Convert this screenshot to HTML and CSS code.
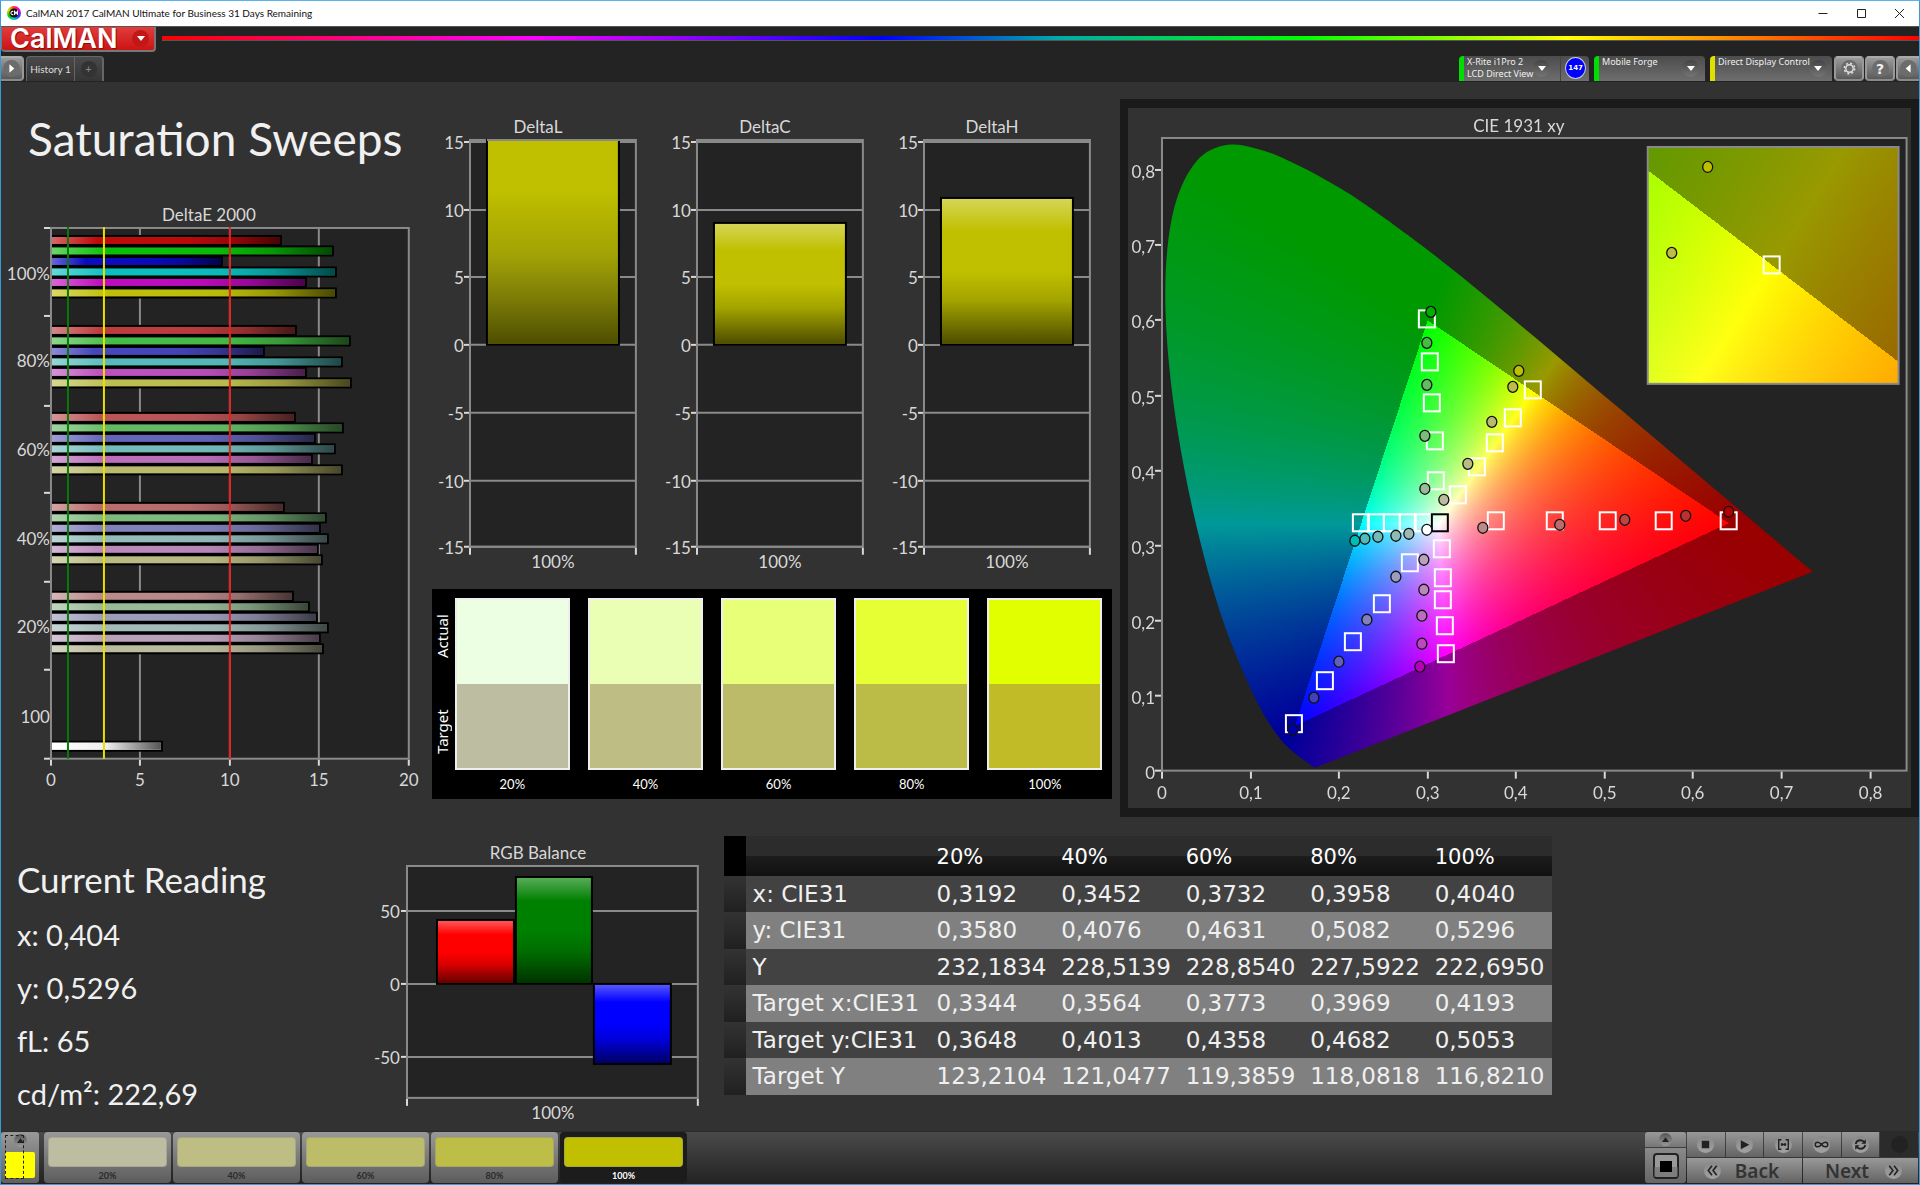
FILE: index.html
```html
<!DOCTYPE html>
<html lang="en">
<head>
<meta charset="utf-8">
<title>CalMAN 2017 CalMAN Ultimate for Business 31 Days Remaining</title>
<link rel="stylesheet" href="styles.css">
</head>
<body>
<div class="window">
  <div class="titlebar">
    <span class="app-icon"><svg viewBox="0 0 14 14" width="14" height="14"><circle cx="7" cy="7" r="4.600" fill="#111"/><path d="M6.300 5.600A1.600 1.600 0 1 0 6.300 8.400M7.600 9V5.400L9 7.400l1.400-2V9" fill="none" stroke="#fff" stroke-width="1.100"/></svg></span>
    <span class="caption">CalMAN 2017 CalMAN Ultimate for Business 31 Days Remaining</span>
    <span class="window-buttons">
      <button class="winbtn" aria-label="Minimize"><svg viewBox="0 0 12 12"><path d="M1.500 6.500h9" stroke="#222" fill="none"/></svg></button>
      <button class="winbtn" aria-label="Maximize"><svg viewBox="0 0 12 12"><path d="M2.500 2.500h8v8h-8z" stroke="#222" fill="none"/></svg></button>
      <button class="winbtn" aria-label="Close"><svg viewBox="0 0 12 12"><path d="M2 2l9 9M11 2l-9 9" stroke="#222" fill="none"/></svg></button>
    </span>
  </div>

  <header class="header">
    <div class="brand-row">
      <button class="brand"><span class="brand-name">CalMAN</span><span class="brand-drop"><svg viewBox="0 0 10 6" width="8" height="5"><path d="M0 0h10L5 6z" fill="#fff"/></svg></span></button>
      <div class="rainbow"></div>
    </div>
    <div class="tab-row">
      <button class="keybtn play" aria-label="Expand"><span class="knob"><svg viewBox="0 0 10 12" width="7" height="9"><path d="M2 0v12l7-6z" fill="#fff"/></svg></span></button>
      <div class="tabs"><button class="tab">History 1</button><button class="tab add" aria-label="Add"><span class="add-knob">+</span></button></div>
      <div class="devices">
        <div class="device meter">
          <button class="device-main"><span class="device-text">X-Rite i1Pro 2<br>LCD Direct View</span><span class="drop"><svg viewBox="0 0 10 6" width="8" height="5"><path d="M0 0h10L5 6z" fill="#fff"/></svg></span></button>
          <span class="count">147</span>
        </div>
        <div class="device source">
          <button class="device-main"><span class="device-text">Mobile Forge</span><span class="drop"><svg viewBox="0 0 10 6" width="8" height="5"><path d="M0 0h10L5 6z" fill="#fff"/></svg></span></button>
        </div>
        <div class="device display">
          <button class="device-main"><span class="device-text">Direct Display Control</span><span class="drop"><svg viewBox="0 0 10 6" width="8" height="5"><path d="M0 0h10L5 6z" fill="#fff"/></svg></span></button>
        </div>
        <div class="keys">
          <button class="keybtn" aria-label="Settings"><span class="knob"><svg viewBox="0 0 14 14" width="13" height="13"><circle cx="7" cy="7" r="4" fill="none" stroke="#ddd" stroke-width="1.600"/><circle cx="7" cy="7" r="5.600" fill="none" stroke="#ddd" stroke-width="1.600" stroke-dasharray="2.200 2.200"/></svg></span></button>
          <button class="keybtn help" aria-label="Help"><span class="knob">?</span></button>
          <button class="keybtn collapse" aria-label="Collapse"><span class="knob"><svg viewBox="0 0 10 12" width="7" height="9"><path d="M8 0v12L1 6z" fill="#fff"/></svg></span></button>
        </div>
      </div>
    </div>
  </header>

  <main class="main">
    <svg class="defs" width="0" height="0" aria-hidden="true">
      <defs>
        <linearGradient id="shade-x"><stop offset="0" stop-color="#fff" stop-opacity=".38"/><stop offset=".2" stop-color="#fff" stop-opacity="0"/><stop offset=".6" stop-color="#000" stop-opacity=".03"/><stop offset=".78" stop-color="#000" stop-opacity=".2"/><stop offset="1" stop-color="#000" stop-opacity=".62"/></linearGradient>
        <linearGradient id="shade-y" x2="0" y2="1"><stop offset="0" stop-color="#fff" stop-opacity=".34"/><stop offset=".22" stop-color="#fff" stop-opacity="0"/><stop offset=".5" stop-color="#000" stop-opacity="0"/><stop offset=".7" stop-color="#000" stop-opacity=".15"/><stop offset="1" stop-color="#000" stop-opacity=".6"/></linearGradient>
        <linearGradient id="shade-y-cut" x2="0" y2="1"><stop offset="0" stop-color="#000" stop-opacity="0"/><stop offset=".25" stop-color="#000" stop-opacity="0"/><stop offset=".55" stop-color="#222" stop-opacity=".18"/><stop offset="1" stop-color="#000" stop-opacity=".6"/></linearGradient>
        <linearGradient id="shade-gray"><stop offset="0" stop-color="#fff"/><stop offset=".5" stop-color="#eee"/><stop offset="1" stop-color="#555"/></linearGradient>
      </defs>
    </svg>
    <section class="upper">
      <div class="sweeps">
        <h1 class="page-title">Saturation Sweeps</h1>
        <svg class="chart" id="delta-e" viewBox="0 0 430 600" role="img" aria-label="DeltaE 2000"></svg>
      </div>
      <div class="deltas">
        <div class="delta-row">
          <svg class="chart delta" viewBox="0 0 227 465" data-title="DeltaL" data-top="30" data-cut="1"></svg>
          <svg class="chart delta" viewBox="0 0 227 465" data-title="DeltaC" data-top="113"></svg>
          <svg class="chart delta" viewBox="0 0 227 465" data-title="DeltaH" data-top="88"></svg>
        </div>
        <div class="swatches">
          <div class="swatch-side"><span>Actual</span><span>Target</span></div>
          <div class="swatch"><div class="pair s20"></div>20%</div>
          <div class="swatch"><div class="pair s40"></div>40%</div>
          <div class="swatch"><div class="pair s60"></div>60%</div>
          <div class="swatch"><div class="pair s80"></div>80%</div>
          <div class="swatch"><div class="pair s100"></div>100%</div>
        </div>
      </div>
      <div class="cie">
        <canvas class="cie-layer" id="cie-fill" width="783" height="700"></canvas>
        <svg class="cie-layer" id="cie" viewBox="0 0 783 700" role="img" aria-label="CIE 1931 xy"></svg>
      </div>
    </section>

    <section class="lower">
      <div class="reading">
        <h2>Current Reading</h2>
        <p>x: 0,404</p>
        <p>y: 0,5296</p>
        <p>fL: 65</p>
        <p>cd/m²: 222,69</p>
      </div>
      <svg class="chart rgb" id="rgb" viewBox="0 0 350 290" role="img" aria-label="RGB Balance"></svg>
      <table class="data">
        <thead><tr><th class="grip"></th><th class="name"></th><th>20%</th><th>40%</th><th>60%</th><th>80%</th><th>100%</th></tr></thead>
        <tbody>
          <tr><td class="grip"></td><td>x: CIE31</td><td>0,3192</td><td>0,3452</td><td>0,3732</td><td>0,3958</td><td>0,4040</td></tr>
          <tr><td class="grip"></td><td>y: CIE31</td><td>0,3580</td><td>0,4076</td><td>0,4631</td><td>0,5082</td><td>0,5296</td></tr>
          <tr><td class="grip"></td><td>Y</td><td>232,1834</td><td>228,5139</td><td>228,8540</td><td>227,5922</td><td>222,6950</td></tr>
          <tr><td class="grip"></td><td>Target x:CIE31</td><td>0,3344</td><td>0,3564</td><td>0,3773</td><td>0,3969</td><td>0,4193</td></tr>
          <tr><td class="grip"></td><td>Target y:CIE31</td><td>0,3648</td><td>0,4013</td><td>0,4358</td><td>0,4682</td><td>0,5053</td></tr>
          <tr><td class="grip"></td><td>Target Y</td><td>123,2104</td><td>121,0477</td><td>119,3859</td><td>118,0818</td><td>116,8210</td></tr>
        </tbody>
      </table>
    </section>
  </main>

  <footer class="toolbar">
    <button class="current" aria-label="Current colour"><span class="mini"><svg viewBox="0 0 10 8" width="7" height="6"><path d="M5 0l5 7H0z" fill="#222"/></svg></span><span class="chip"></span></button>
    <button class="level"><span class="c20"></span>20%</button>
    <button class="level"><span class="c40"></span>40%</button>
    <button class="level"><span class="c60"></span>60%</button>
    <button class="level"><span class="c80"></span>80%</button>
    <button class="level selected"><span class="c100"></span>100%</button>
    <div class="transport">
      <div class="stopper">
        <button class="up" aria-label="More"><span class="mini"><svg viewBox="0 0 10 8" width="7" height="6"><path d="M5 0l5 7H0z" fill="#222"/></svg></span></button>
        <button class="bigstop" aria-label="Pattern"><svg viewBox="0 0 26 26" width="26" height="26"><rect x="1" y="1" width="24" height="24" rx="3" fill="#999" stroke="#222" stroke-width="2"/><path d="M1 14h24v10H1z" fill="#6a6a6a" opacity=".6"/><rect x="7" y="8" width="12" height="11" fill="#000"/></svg></button>
      </div>
      <div class="controls">
        <button aria-label="Stop"><span class="dot"><svg viewBox="0 0 16 16"><path d="M4.500 4.500h7v7h-7z" fill="#222"/></svg></span></button>
        <button aria-label="Play"><span class="dot"><svg viewBox="0 0 16 16"><path d="M4.500 4l8 4.300-8 4.200z" fill="#222"/></svg></span></button>
        <button aria-label="Range"><span class="dot"><svg viewBox="0 0 16 16"><path d="M6 3.500H3.500v9H6M10 3.500h2.500v9H10M5.500 8h5M6.500 6.500v3M9.500 6.500v3" stroke="#222" stroke-width="1.300" fill="none"/></svg></span></button>
        <button aria-label="Loop"><span class="dot"><svg viewBox="0 0 16 16"><path d="M8 8C6.500 6 5.300 5.800 4.300 5.800a2.200 2.200 0 0 0 0 4.400C5.300 10.200 6.500 10 8 8s2.700-2.200 3.700-2.200a2.200 2.200 0 0 1 0 4.400C10.700 10.200 9.500 10 8 8z" stroke="#222" stroke-width="1.400" fill="none"/></svg></span></button>
        <button aria-label="Refresh"><span class="dot"><svg viewBox="0 0 16 16"><path d="M3.500 7.500C4 5 6 4 8 4c1.400 0 2.400.5 3.200 1.300M12.500 8.500C12 11 10 12 8 12c-1.400 0-2.400-.5-3.200-1.300" stroke="#222" stroke-width="1.700" fill="none"/><path d="M13 3v4.200H8.800zM3 13V8.800h4.200z" fill="#222"/></svg></span></button>
        <button class="off" aria-label="Unavailable" disabled><span class="dot"></span></button>
        <button class="nav back"><span class="dot"><svg viewBox="0 0 16 16"><path d="M7.500 3.500L4 8l3.500 4.500M12 3.500L8.500 8l3.500 4.500" stroke="#222" stroke-width="1.500" fill="none"/></svg></span>Back</button>
        <button class="nav next">Next<span class="dot"><svg viewBox="0 0 16 16"><path d="M4 3.500L7.500 8 4 12.500M8.500 3.500L12 8l-3.500 4.500" stroke="#222" stroke-width="1.500" fill="none"/></svg></span></button>
      </div>
    </div>
  </footer>
</div>
<script src="charts.js"></script>
</body>
</html>
```
FILE: styles.css
```css
* { box-sizing: border-box; }
body { margin: 0; background: #323232; font-family: Lato, "Open Sans", sans-serif; color: #f0f0f0; }
button { font: inherit; color: inherit; border: 0; margin: 0; padding: 0; background: none; display: flex; align-items: center; justify-content: center; }
svg { display: block; }
.window { min-height: 100vh; display: flex; flex-direction: column; border: 1px solid #3a9ad9; border-top-color: #5ab4f0; }

.titlebar { height: 25px; background: #fff; display: flex; align-items: center; padding: 0 14px 2px 6px; color: #111; }
.app-icon { width: 14px; height: 14px; border-radius: 50%; background: conic-gradient(#f33, #e0e, #33f, #0cc, #0c0, #dd0, #f33); }
.caption { font-size: 10px; margin-left: 5px; }
.window-buttons { margin-left: auto; display: flex; gap: 26px; }
.winbtn { width: 12px; height: 12px; }
.winbtn svg { width: 12px; height: 12px; }

.header { height: 56px; background: #232323; }
.brand-row { height: 30px; display: flex; align-items: flex-start; gap: 6px; border-top: 1px solid #555; }
.brand { width: 155px; height: 25px; background: linear-gradient(#e23c3c, #cc1414); border: 1px solid #777; border-width: 0 2px 2px 1px; border-radius: 0 0 4px 4px; justify-content: space-between; padding: 0 5px 0 8px; }
.brand-name { font: 600 27px/24px Inter, sans-serif; color: #fff; text-shadow: 1px 1px 1px #7a1010; }
.brand-drop { width: 17px; height: 17px; border-radius: 50%; background: #c01818; display: flex; align-items: center; justify-content: center; }
.rainbow { flex: 1; height: 5px; margin-top: 9px; border-bottom: 1px solid #555; background: linear-gradient(90deg, #f00, #f0f 21%, #00f 41%, #0aa 51%, #0f0 65%, #ff0 80%, #f00); }
.tab-row { height: 25px; display: flex; }
.keybtn { width: 30px; height: 25px; border: 2px solid #999; border-color: #aaa #999 #8a8a8a; border-radius: 4px; background: linear-gradient(#9a9a9a, #5a5a5a); }
.knob { width: 17px; height: 17px; border-radius: 50%; background: #6c6c6c; display: flex; align-items: center; justify-content: center; }
.play { width: 23px; border-left: 0; border-radius: 0 4px 4px 0; }
.tabs { margin-left: 2px; height: 25px; display: flex; border: 1px solid #666; border-width: 1px 2px 0 1px; border-radius: 4px 4px 0 0; background: linear-gradient(#4a4a4a, #353535); color: #ddd; font-size: 10px; }
.tab { width: 48px; border-right: 1px solid #666; }
.tab.add { width: 27px; border: 0; color: #888; }
.add-knob { width: 16px; height: 16px; border-radius: 50%; background: #333; line-height: 15px; font-size: 11px; }
.devices { margin-left: auto; display: flex; gap: 5px; }
.device { display: flex; background: linear-gradient(#4c4c4c, #6e6e6e); border-left: 5px solid #0d0; border-radius: 4px 4px 0 0; height: 25px; }
.device-main { flex: 1; align-items: flex-start; justify-content: space-between; padding-left: 3px; text-align: left; }
.device-text { font: 9px/12px "Noto Sans", sans-serif; white-space: nowrap; }
.drop { width: 17px; height: 17px; margin-top: 4px; border-radius: 50%; background: linear-gradient(#444, #757575); display: flex; align-items: center; justify-content: center; }
.meter { width: 130px; }
.meter .device-main { padding-right: 10px; border-right: 1px solid #444; }
.source { width: 111px; padding-right: 6px; }
.display { width: 122px; padding-right: 6px; border-left-color: #e0e000; margin-right: -3px; }
.count { width: 22px; height: 22px; margin: 1px 3px 0 4px; border-radius: 50%; background: #00f; border: 1px solid #ccd; font: 700 7px/20px "DejaVu Sans", sans-serif; text-align: center; color: #fff; }
.keys { display: flex; gap: 1px; }
.help { font: 700 14px/16px "DejaVu Sans", sans-serif; }
.collapse { width: 23px; border-right: 0; border-radius: 4px 0 0 4px; }

.main { flex: 1; background: #323232; }
.defs { position: absolute; }
.upper { display: grid; grid-template-columns: 430fr 690fr 799fr; align-items: start; }
.page-title { margin: 0; padding: 25px 0 0 27px; height: 118px; font-size: 46px; line-height: 64px; font-weight: 400; white-space: nowrap; }
.chart { width: 100%; height: auto; }
.deltas { padding-top: 28px; }
.delta-row { display: grid; grid-template-columns: repeat(3, 227fr) 9fr; }
.swatches { margin: 14px 8px 0 1px; height: 210px; background: #000; display: grid; grid-template-columns: 5px repeat(5, 1fr); column-gap: 18px; padding: 9px 10px 0 0; }
.swatch { text-align: center; font-size: 13px; line-height: 28px; color: #fff; }
.pair { height: 172px; border: 2px solid #eee; }
.swatch-side { width: 20px; display: grid; grid-template-rows: 86px 86px; font: 15px/20px "Noto Sans", sans-serif; color: #fff; }
.swatch-side span { writing-mode: vertical-rl; transform: rotate(180deg); text-align: center; padding-top: 10px; }
.swatch-side span:last-child { padding: 0 0 10px; }
.s20 { background: linear-gradient(#ecffe2 50%, #bdbda2 50%); }
.s40 { background: linear-gradient(#ebffb4 50%, #bdbd84 50%); }
.s60 { background: linear-gradient(#e8ff78 50%, #bbbb69 50%); }
.s80 { background: linear-gradient(#e6ff34 50%, #bbbb48 50%); }
.s100 { background: linear-gradient(#e2ff00 50%, #c0bb26 50%); }
.cie { margin-top: 17px; border: 9px solid #1a1a1a; border-width: 9px 8px; display: grid; background: #323232; }
.cie-layer { grid-area: 1 / 1; width: 100%; height: auto; }

.lower { display: grid; grid-template-columns: 369fr 350fr 4fr 829fr 367fr; align-items: start; padding-top: 19px; }
.rgb { margin-top: 2px; }
.reading { padding: 16px 0 0 16px; font-size: 29px; }
.reading h2 { margin: 0 0 2px; font-size: 35px; line-height: 54px; font-weight: 400; }
.reading p { margin: 0; line-height: 52px; padding-top: 1px; }
.data { grid-column: 4; width: 100%; height: 259px; border-collapse: collapse; table-layout: fixed; font: 23px/24px "DejaVu Sans", sans-serif; }
.data th, .data td { padding: 0 0 0 7px; text-align: left; font-weight: 400; white-space: nowrap; }
.data th { height: 40px; color: #fff; font-size: 21px; padding-top: 2px; }
.data .grip { width: 22px; background: linear-gradient(#333, #202020); padding: 0; }
.data thead .grip { background: #000; }
.data .name { width: 184px; }
.data thead tr { background: linear-gradient(#2c2c2c 50%, #1c1c1c 51%, #111); }
.data tbody tr { background: #424242; }
.data tbody tr:nth-child(even) { background: #808080; }

.toolbar { height: 53px; display: flex; background: linear-gradient(#4a4a4a, #222); border-top: 1px solid #2a2a2a; padding: 0 1px 1px 0; gap: 2px; }
.current { position: relative; width: 38px; margin-right: 3px; flex-direction: column; justify-content: space-between; padding: 2px 4px 5px; background: linear-gradient(#999, #606060); border-radius: 3px; }
.current::after { content: ""; position: absolute; left: 4px; top: 3px; bottom: 4px; width: 17px; border: 1px dashed #222; }
.mini { width: 13px; height: 13px; border-radius: 50%; background: linear-gradient(#555, #999); display: flex; align-items: center; justify-content: center; }
.chip { width: 30px; height: 26px; background: #ff0; border-radius: 2px; }
.level { width: 127px; flex-direction: column; justify-content: flex-start; padding-top: 5px; border-radius: 4px; background: linear-gradient(#999, #5c5c5c); color: #2a2a2a; font-size: 9px; font-weight: 700; line-height: 15px; }
.level span { width: 119px; height: 31px; margin-bottom: 1px; border-radius: 4px; border: 1px solid #8886; }
.level.selected { background: #1c1c1c; color: #fff; }
.c20 { background: #bdbda2; }
.c40 { background: #bdbd84; }
.c60 { background: #bdbd69; }
.c80 { background: #bdbd48; }
.c100 { background: #c0c000; }
.transport { margin-left: auto; display: flex; gap: 1px; }
.stopper { width: 41px; display: flex; flex-direction: column; gap: 1px; }
.up { height: 15px; background: linear-gradient(#999, #777); border-radius: 3px 3px 0 0; }
.bigstop { flex: 1; background: linear-gradient(#8a8a8a, #666); border-radius: 0 0 3px 3px; }
.controls { width: 231px; display: grid; grid-template-columns: repeat(6, 1fr); grid-template-rows: 25px 25px; gap: 1px; color: #333; }
.controls button { background: linear-gradient(#999, #636363); }
.controls .off { background: #2b2b2b; }
.controls .off .dot { background: #222; }
.controls .nav { grid-column: span 3; gap: 14px; font: 600 19px/24px "Noto Sans", sans-serif; }
.controls .back { padding-right: 6px; }
.controls .next { gap: 16px; padding-left: 6px; }
.dot { width: 17px; height: 17px; border-radius: 50%; background: linear-gradient(#888, #a2a2a2); display: block; }
.dot svg { width: 17px; height: 17px; }

.title { font-size: 17px; fill: #d8d8d8; text-anchor: middle; }
.label { font-size: 17px; fill: #d8d8d8; }
.end { text-anchor: end; }
.mid { text-anchor: middle; }
.plot { fill: #232323; }
.line { stroke: #8a8a8a; stroke-width: 2; fill: none; }
.tick { stroke: #d8d8d8; stroke-width: 2; }
```
FILE: charts.js
```js
const NS = 'http://www.w3.org/2000/svg';
function add(parent, tag, attrs, text) {
  const el = document.createElementNS(NS, tag);
  for (const k in attrs) el.setAttribute(k, attrs[k]);
  if (text !== undefined) el.textContent = text;
  parent.appendChild(el);
  return el;
}
const line = (p, cls, x1, y1, x2, y2) => add(p, 'line', { class: cls, x1, y1, x2, y2 });
const text = (p, cls, x, y, t) => add(p, 'text', { class: cls, x, y }, t);
function bar(p, x, y, width, height, fill, shade) {
  add(p, 'rect', { x, y, width, height, fill, stroke: '#000', 'stroke-width': 2 });
  add(p, 'rect', { x: x + 1, y: y + 1, width: width - 2, height: height - 2, fill: `url(#${shade})` });
}

/* DeltaE 2000: one group of six hues per saturation level */
(function () {
  const s = document.getElementById('delta-e');
  text(s, 'title', 208, 21, 'DeltaE 2000');
  add(s, 'rect', { class: 'plot', x: 50, y: 28, width: 358, height: 531 });
  [139, 229, 318].forEach(x => line(s, 'line', x, 28, x, 559));
  const groups = [
    [40, [280, 332, 221, 335, 305, 335], ['#bf0a0a', '#0abf0a', '#0a0abf', '#0abfbf', '#bf0abf', '#bfbf0a']],
    [130, [295, 349, 263, 341, 305, 350], ['#bd3c3c', '#45bd45', '#4545bd', '#56bbbb', '#bd50bd', '#bdbd50']],
    [217, [294, 342, 314, 334, 311, 341], ['#bb5555', '#64bb64', '#6464bb', '#74bbbb', '#bb6ebb', '#bbbb6e']],
    [307, [283, 325, 319, 327, 317, 321], ['#bb6c6c', '#7dbb7d', '#8080bb', '#92bbbb', '#bb88bb', '#bbbb84']],
    [396, [292, 308, 316, 327, 319, 322], ['#bb8a8a', '#98bb98', '#9c9cbb', '#a5bbbb', '#bba2bb', '#bbbb9e']]
  ];
  groups.forEach(([y, ends, fills]) => ends.forEach((e, i) =>
    bar(s, 50, y - 4 + i * 10.5, e - 50, 9, fills[i], 'shade-x')));
  bar(s, 50, 542, 111, 9, '#fff', 'shade-gray');
  add(s, 'rect', { class: 'line', x: 50, y: 28, width: 358, height: 531 });
  [28, 116, 206, 293, 382, 470, 559].forEach(y => line(s, 'tick', 43, y, 49, y));
  [50, 139, 229, 318, 408].forEach((x, i) => {
    line(s, 'tick', x, 560, x, 566);
    text(s, 'label mid', x, 586, i * 5);
  });
  [['100%', 80], ['80%', 167], ['60%', 256], ['40%', 345], ['20%', 433], ['100', 523]].forEach(([t, y]) => text(s, 'label end', 49, y, t));
  [[67, '#0a780a'], [103, '#e8e000'], [229, '#e02222']].forEach(([x, c]) =>
    add(s, 'line', { x1: x, x2: x, y1: 27, y2: 559, stroke: c, 'stroke-width': 2 }));
})();

/* DeltaL, DeltaC and DeltaH share one frame */
document.querySelectorAll('.delta').forEach(s => {
  text(s, 'title', 107, 23, s.dataset.title);
  add(s, 'rect', { class: 'plot', x: 39, y: 30, width: 166, height: 407 });
  const rows = [[15, 32], [10, 100], [5, 167], [0, 235], [-5, 303], [-10, 371], [-15, 437]];
  rows.forEach(([v, y]) => {
    line(s, 'line', 39, y, 205, y);
    line(s, 'tick', 33, y, 38, y);
    text(s, 'label end', 33, y + 7, v);
  });
  add(s, 'rect', { class: 'line', x: 39, y: 30, width: 166, height: 407 });
  const top = +s.dataset.top;
  bar(s, 56, top, 132, 235 - top, '#c0c000', s.dataset.cut ? 'shade-y-cut' : 'shade-y');
  if (s.dataset.cut) line(s, 'line', 56, 30, 189, 30);
  line(s, 'tick', 39, 438, 39, 445);
  line(s, 'tick', 205, 438, 205, 445);
  text(s, 'label mid', 122, 458, '100%');
});

/* RGB balance */
(function () {
  const s = document.getElementById('rgb');
  text(s, 'title', 168, 21, 'RGB Balance');
  add(s, 'rect', { class: 'plot', x: 37, y: 28, width: 291, height: 232 });
  [[50, 73], [0, 146], [-50, 219]].forEach(([v, y]) => {
    line(s, 'line', 37, y, 328, y);
    line(s, 'tick', 31, y, 36, y);
    text(s, 'label end', 30, y + 7, v);
  });
  add(s, 'rect', { class: 'line', x: 37, y: 28, width: 291, height: 232 });
  bar(s, 67, 82, 77, 64, '#f00', 'shade-y');
  bar(s, 146, 39, 76, 107, '#008000', 'shade-y');
  bar(s, 224, 146, 77, 80, '#00f', 'shade-y');
  line(s, 'tick', 37, 261, 37, 268);
  line(s, 'tick', 328, 261, 328, 268);
  text(s, 'label mid', 183, 281, '100%');
})();

/* CIE 1931 chromaticity diagram */
const X0 = 34, Y0 = 663, SX = 885.7, SY = 751;
const INSET = { x: 520, y: 39, w: 251, h: 237, cx: 644, cy: 157, tx: 0.4193, ty: 0.5053, sx: 4190, sy: 4033 };
const R = [0.64, 0.33], G = [0.30, 0.60], B = [0.15, 0.06];
const LOCUS = [[.1741,.005],[.1733,.0048],[.1714,.0051],[.1689,.0069],[.1644,.0109],[.1611,.0138],[.1566,.0177],[.151,.0227],[.144,.0297],[.1355,.0399],[.1241,.0578],[.1096,.0868],[.0913,.1327],[.0687,.2007],[.0454,.295],[.0235,.4127],[.0082,.5384],[.0039,.6548],[.0139,.7502],[.0389,.812],[.0743,.8338],[.1142,.8262],[.1547,.8059],[.1929,.7816],[.2296,.7543],[.3016,.6923],[.3731,.6245],[.4441,.5547],[.5125,.4866],[.5752,.4242],[.627,.3725],[.6658,.334],[.6915,.3083],[.719,.2809],[.7347,.2653]];

function side(a, b, x, y) { return (b[0] - a[0]) * (y - a[1]) - (b[1] - a[1]) * (x - a[0]); }
/* Linear RGB of a chromaticity, scaled to full brightness and dimmed outside the gamut triangle */
function colourAt(x, y) {
  y = Math.max(y, 0.001);
  const X = x / y, Z = (1 - x - y) / y;
  let c = [3.2406 * X - 1.5372 - 0.4986 * Z, -0.9689 * X + 1.8758 + 0.0415 * Z, 0.0557 * X - 0.2040 + 1.0570 * Z];
  c = c.map(v => Math.max(v, 0));
  const m = Math.max(...c);
  const outside = side(R, G, x, y) < 0 || side(G, B, x, y) < 0 || side(B, R, x, y) < 0;
  const k = outside ? 153 : 255;
  return c.map(v => k * v / m);
}
(function () {
  const cv = document.getElementById('cie-fill'), ctx = cv.getContext('2d');
  ctx.fillStyle = '#232323';
  ctx.fillRect(34, 30, 745, 633);
  function layer(x, y, w, h, toXY) {
    const c = document.createElement('canvas');
    c.width = w; c.height = h;
    const g = c.getContext('2d'), im = g.createImageData(w, h);
    for (let j = 0; j < h; j++) for (let i = 0; i < w; i++) {
      const rgb = colourAt(...toXY(x + i + 0.5, y + j + 0.5)), o = (j * w + i) * 4;
      im.data[o] = rgb[0]; im.data[o + 1] = rgb[1]; im.data[o + 2] = rgb[2]; im.data[o + 3] = 255;
    }
    g.putImageData(im, 0, 0);
    return c;
  }
  const p = LOCUS.map(([x, y]) => [X0 + x * SX, Y0 - y * SY]);
  ctx.save();
  ctx.beginPath();
  ctx.moveTo(...p[0]);
  for (let i = 0; i < p.length - 1; i++) {
    const a = p[Math.max(i - 1, 0)], b = p[i], c = p[i + 1], d = p[Math.min(i + 2, p.length - 1)];
    ctx.bezierCurveTo(b[0] + (c[0] - a[0]) / 6, b[1] + (c[1] - a[1]) / 6, c[0] - (d[0] - b[0]) / 6, c[1] - (d[1] - b[1]) / 6, c[0], c[1]);
  }
  ctx.closePath();
  ctx.clip();
  ctx.drawImage(layer(34, 30, 700, 633, (x, y) => [(x - X0) / SX, (Y0 - y) / SY]), 34, 30);
  ctx.restore();
  const n = INSET;
  ctx.drawImage(layer(n.x, n.y, n.w, n.h, (x, y) => [n.tx + (x - n.cx) / n.sx, n.ty - (y - n.cy) / n.sy]), n.x, n.y);
})();
(function () {
  const s = document.getElementById('cie');
  text(s, 'title', 391, 24, 'CIE 1931 xy');
  add(s, 'rect', { class: 'line', x: 34, y: 30, width: 745, height: 633 });
  for (let i = 0; i <= 8; i++) {
    const x = Math.round(X0 + i * SX / 10), y = Math.round(Y0 - i * SY / 10), t = i ? '0,' + i : '0';
    line(s, 'tick', x, 664, x, 671);
    text(s, 'label mid', x, 691, t);
    line(s, 'tick', 27, y, 33, y);
    text(s, 'label end', 27, y + 8, t);
  }
  const square = (x, y, stroke) => add(s, 'rect', { x: x - 8, y: y - 8.5, width: 16, height: 17, fill: 'none', stroke, 'stroke-width': 2 });
  const dot = (x, y, fill) => add(s, 'ellipse', { cx: x, cy: y, rx: 5, ry: 5.5, fill, stroke: '#111', 'stroke-width': 1.3 });
  [[233,415],[248,415],[264,415],[280,415],[295,415],
   [314,441],[315,470],[315,492],[317,518],[318,546],
   [282,455],[254,496],[225,534],[197,573],[166,616],
   [330,387],[349,359],[367,335],[385,310],[405,282],
   [308,373],[307,333],[304,295],[302,254],[299,211],
   [368,413],[427,413],[480,413],[536,413],[601,413]].forEach(([x, y]) => square(x, y, '#fff'));
  square(312, 415, '#000');
  [[299,422,'#fff'],
   [281,426,'#9cb8b8'],[268,428,'#8cbcb8'],[250,429,'#70bcb8'],[237,431,'#50bcb8'],[227,433,'#00bcb4'],
   [296,452,'#bba2bb'],[296,482,'#bb88bb'],[294,508,'#bb6ebb'],[294,536,'#bd48bd'],[292,559,'#b800b8'],
   [268,469,'#9c9cbb'],[239,512,'#8080bb'],[211,554,'#6060bb'],[186,590,'#4040b8'],[165,622,'#0000a8'],
   [316,392,'#bbbb9e'],[340,356,'#bbbb84'],[364,314,'#bbbb6e'],[385,279,'#bdbd48'],[391,263,'#bfbf00'],
   [297,381,'#98bb98'],[297,328,'#7dbb7d'],[299,277,'#64bb64'],[299,235,'#45bd45'],[303,204,'#00b000'],
   [355,420,'#bb8a8a'],[432,417,'#bb6c6c'],[497,412,'#bb4444'],[558,408,'#bb3030'],[601,404,'#b00000']].forEach(d => dot(...d));
  add(s, 'rect', { class: 'line', x: INSET.x, y: INSET.y, width: INSET.w, height: INSET.h });
  square(644, 157, '#fff');
  dot(580, 59, '#bfbf00');
  dot(544, 145, '#bdbd48');
})();
```
